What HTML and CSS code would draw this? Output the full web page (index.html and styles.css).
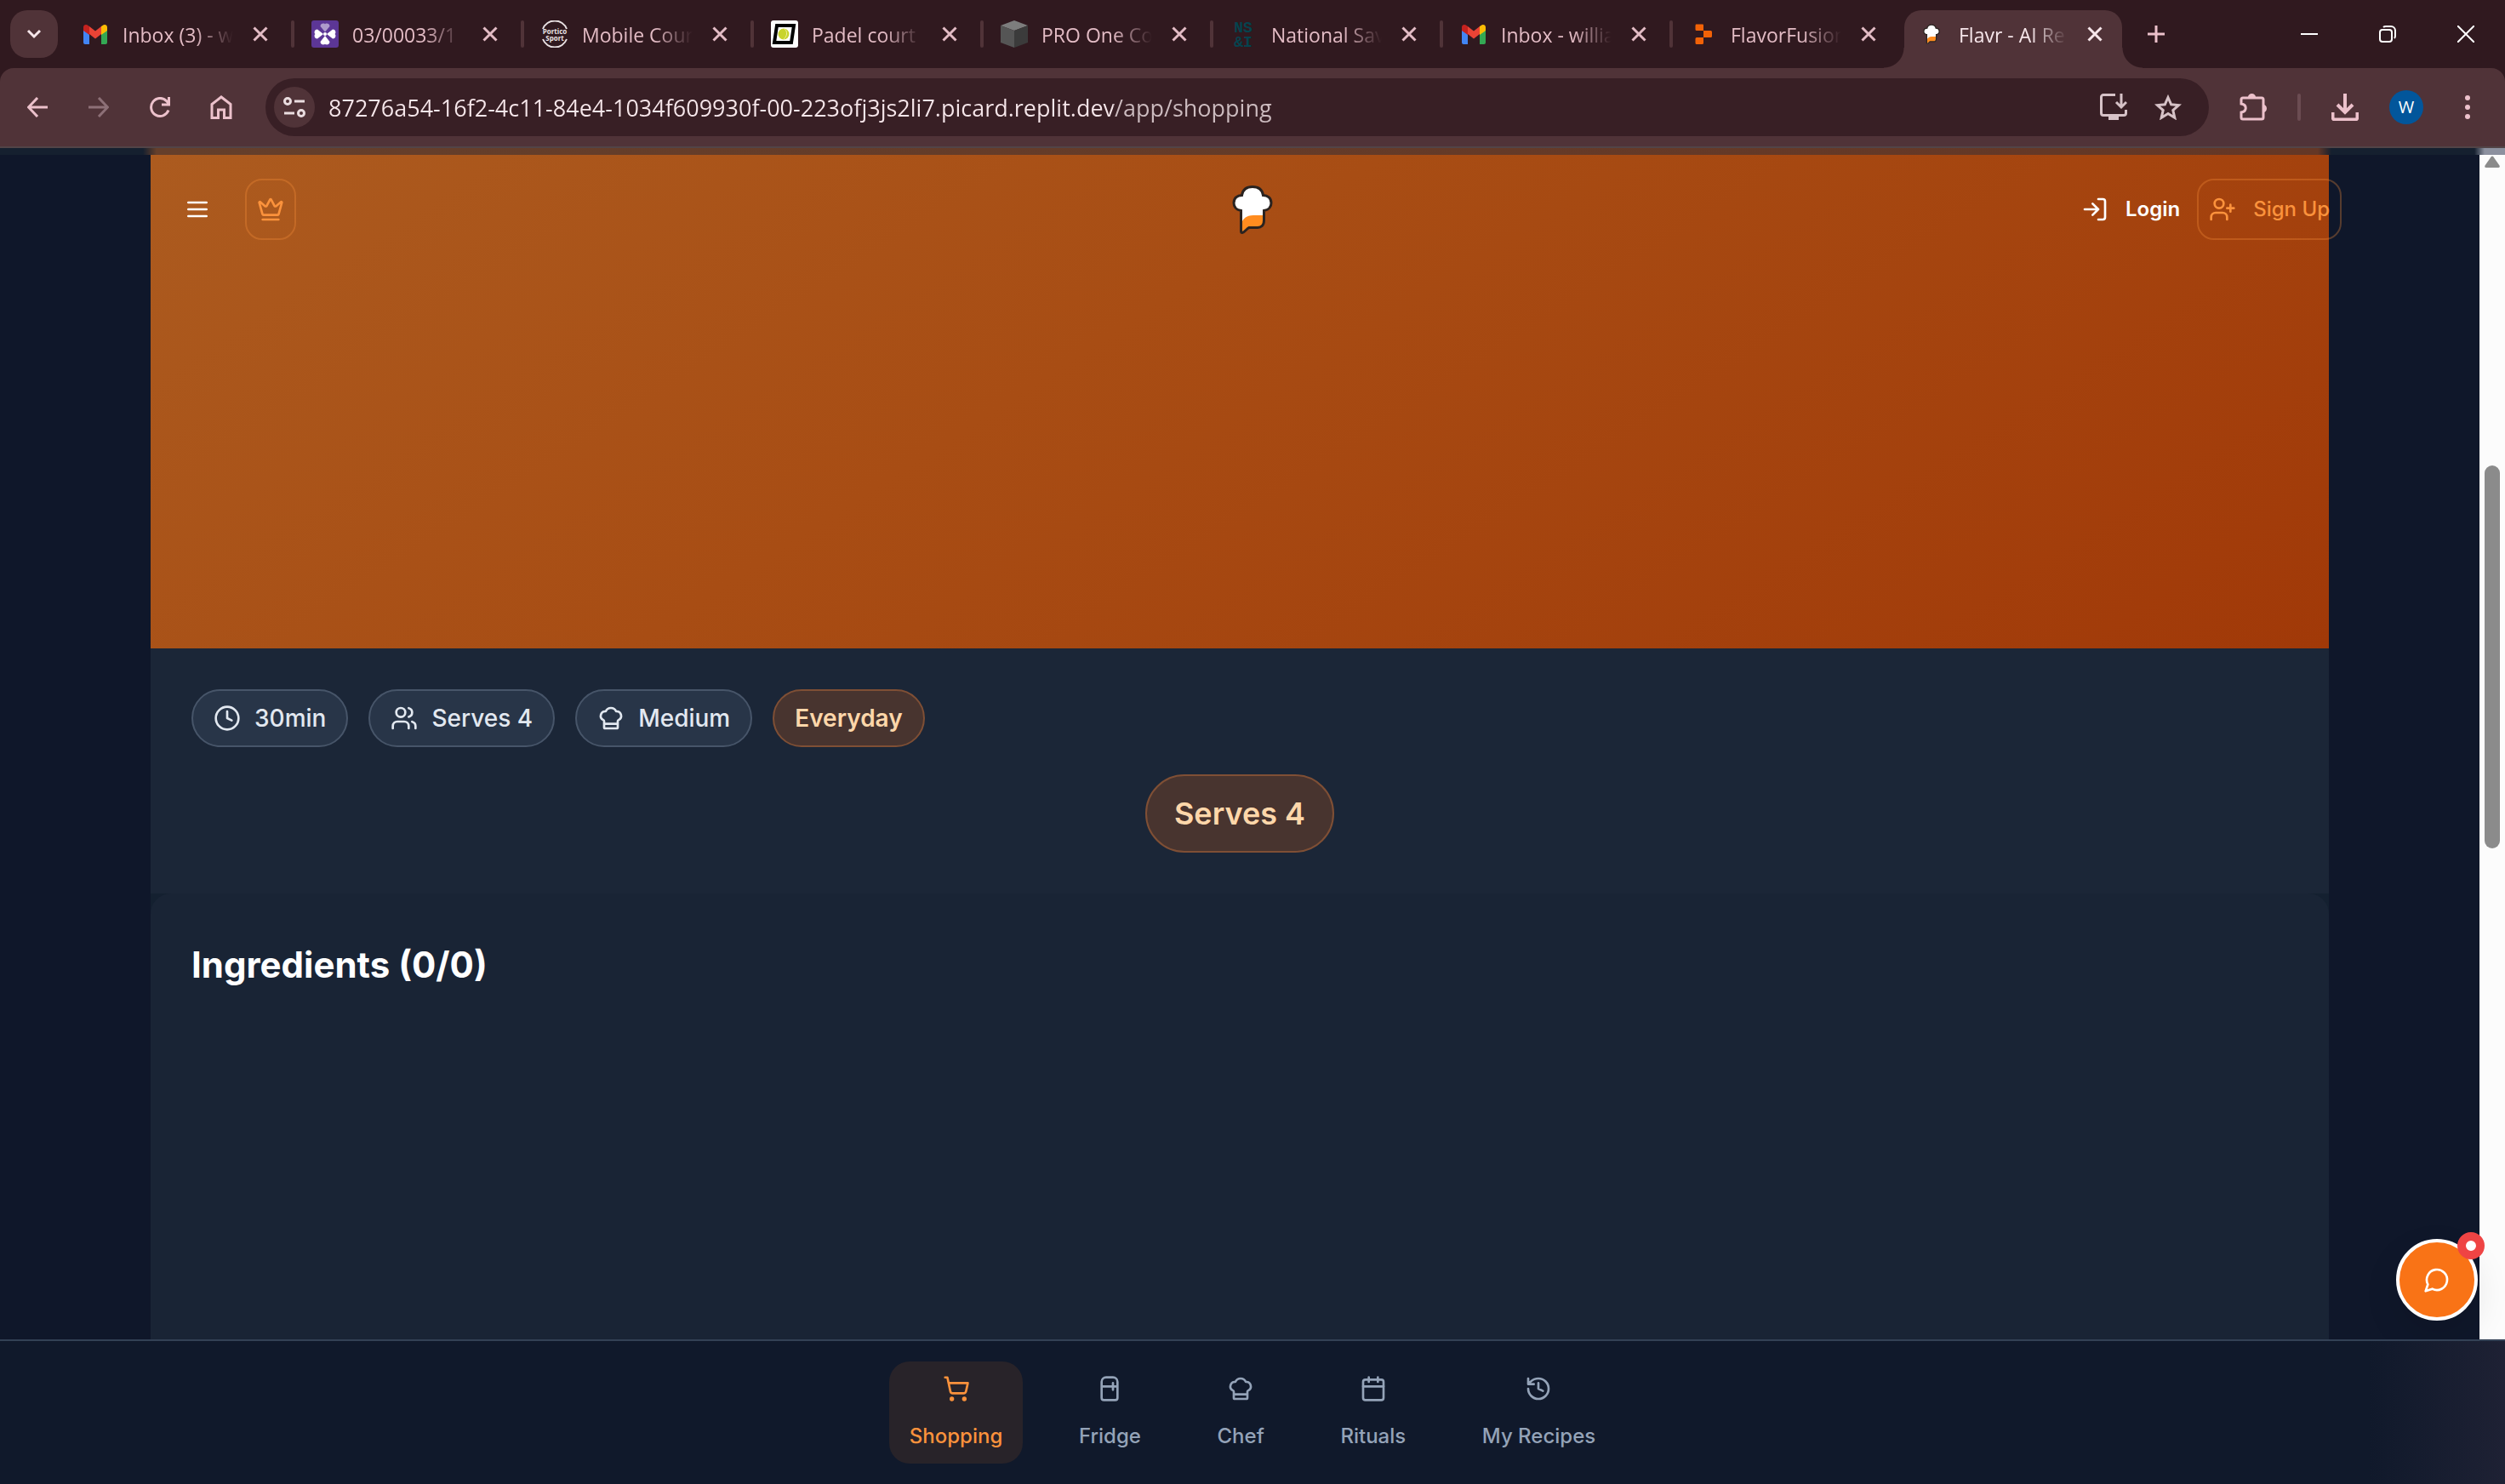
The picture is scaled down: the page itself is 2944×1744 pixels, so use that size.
FILE: index.html
```html
<!DOCTYPE html>
<html lang="en">
<head>
<meta charset="utf-8">
<title>Flavr - AI Recipes</title>
<link rel="stylesheet" href="styles.css">
</head>
<body>
<svg class="defs" aria-hidden="true">
  <symbol id="x" viewBox="0 0 18 18"><path d="M1.500 1.500l15 15M16.500 1.500l-15 15" fill="none" stroke="currentColor" stroke-width="3"/></symbol>
  <symbol id="gmail" viewBox="0 0 32 32"><path d="M2 9v17a2 2 0 0 0 2 2h5V14z" fill="#4285f4"/><path d="M23 14v14h5a2 2 0 0 0 2-2V9z" fill="#34a853"/><path d="M9 7v9l7 5.500 7-5.500V7l-7 5.500z" fill="#ea4335"/><path d="M2 8v4l7 5V7L7.500 6C5 4 2 5.500 2 8z" fill="#c5221f"/><path d="M30 8v4l-7 5V7l1.500-1C27 4 30 5.500 30 8z" fill="#fbbc04"/></symbol>
  <symbol id="flavr" viewBox="0 0 48 58"><path d="M10.500 30.500C4 29.500 2 25 2 21.500c0-5.500 4-9 9.500-9C12.500 6 17 2.500 24 2.500S35.500 6 36.500 12.500c5.500 0 9.500 3.500 9.500 9 0 3.500-2 8-8.500 9V42c0 6-3.500 8.500-7.500 8.500H20c-3 1-5 5.500-8 6-1 0-1.500-.5-1.500-2z" fill="#fff"/><path d="M37.500 36H25C17 36 12 40 10.500 47v9c4-1 5-5.500 9-5.500h11c4 0 7-3 7-8z" fill="#ff8c1f"/><path d="M10.500 30.500C4 29.500 2 25 2 21.500c0-5.500 4-9 9.500-9C12.500 6 17 2.500 24 2.500S35.500 6 36.500 12.500c5.500 0 9.500 3.500 9.500 9 0 3.500-2 8-8.500 9V42c0 6-3.500 8.500-7.500 8.500H20c-3 1-5 5.500-8 6-1 0-1.500-.5-1.500-2z" fill="none" stroke="#2a2320" stroke-width="3"/></symbol>
  <symbol id="chef" viewBox="0 0 24 24"><path d="M17 21a1 1 0 0 0 1-1v-5.350c0-.457.316-.844.727-1.041a4 4 0 0 0-2.134-7.589 5 5 0 0 0-9.186 0 4 4 0 0 0-2.134 7.588c.411.198.727.585.727 1.041V20a1 1 0 0 0 1 1ZM6 17h12"/></symbol>
</svg>

<div class="chrome">
<div class="tabstrip">
  <button class="tab-search" aria-label="Search tabs"><svg width="18" height="12" viewBox="0 0 18 12"><path d="M2 2l7 7 7-7" fill="none" stroke="#f6e6ea" stroke-width="3"/></svg></button>
  <div class="tabs">
    <div class="tab"><svg class="fav"><use href="#gmail"/></svg><span class="tab-title">Inbox (3) - w</span><button class="tab-close" aria-label="Close tab"><svg><use href="#x"/></svg></button></div>
    <div class="tab"><svg class="fav" viewBox="0 0 32 32"><rect width="32" height="32" rx="3" fill="#5c3696"/><g fill="#fff"><circle cx="16" cy="16" r="2"/><path d="M14 16l-7 5.500c-4 0-4-5-2.500-5.500-1.500-.5-1.500-5.500 2.500-5.500zM18 16l7 5.500c4 0 4-5 2.500-5.500 1.500-.5 1.500-5.500-2.500-5.500zM16 18l-5.500 7c0 4 5 4 5.500 2.500.5 1.500 5.500 1.500 5.500-2.500z"/><path d="M16 13.500L10.500 7c0-4 5-4 5.500-2.500.5-1.500 5.500-1.500 5.500 2.500z" opacity=".5"/></g></svg><span class="tab-title">03/00033/1</span><button class="tab-close" aria-label="Close tab"><svg><use href="#x"/></svg></button></div>
    <div class="tab"><svg class="fav" viewBox="0 0 32 32"><path d="M2 10a15 15 0 0 1 28 0M2 22a15 15 0 0 0 28 0" fill="none" stroke="#e8e0e2" stroke-width="2"/><text x="16" y="16" class="fav-text">Portico</text><text x="16" y="24" class="fav-text">Sport</text></svg><span class="tab-title">Mobile Cour</span><button class="tab-close" aria-label="Close tab"><svg><use href="#x"/></svg></button></div>
    <div class="tab"><svg class="fav" viewBox="0 0 32 32"><rect width="32" height="32" rx="3" fill="#fff"/><path d="M7 6h20l-3 20H4z" fill="none" stroke="#000" stroke-width="4"/><circle cx="15" cy="16" r="6.500" fill="#c9d42c"/><path d="M16 10c4 3 3 9-1 12" fill="none" stroke="#eef29a"/></svg><span class="tab-title">Padel court h</span><button class="tab-close" aria-label="Close tab"><svg><use href="#x"/></svg></button></div>
    <div class="tab"><svg class="fav" viewBox="0 0 32 32"><path d="M16 0l16 6-16 6L0 6z" fill="#7d7d7d"/><path d="M0 6l16 6v20L0 26z" fill="#555"/><path d="M32 6l-16 6v20l16-6z" fill="#3b3b3b"/></svg><span class="tab-title">PRO One Co</span><button class="tab-close" aria-label="Close tab"><svg><use href="#x"/></svg></button></div>
    <div class="tab"><svg class="fav" viewBox="0 0 32 32"><text x="15" y="14" class="fav-nsi">NS</text><text x="15" y="31" class="fav-nsi">&amp;I</text></svg><span class="tab-title">National Sav</span><button class="tab-close" aria-label="Close tab"><svg><use href="#x"/></svg></button></div>
    <div class="tab"><svg class="fav"><use href="#gmail"/></svg><span class="tab-title">Inbox - willia</span><button class="tab-close" aria-label="Close tab"><svg><use href="#x"/></svg></button></div>
    <div class="tab"><svg class="fav" viewBox="0 0 32 32"><path d="M7 4.500h8a1 1 0 0 1 1 1V12H8a1.500 1.500 0 0 1-1.500-1.500V6zM16 12h8.500a1.500 1.500 0 0 1 1.500 1.500v5a1.500 1.500 0 0 1-1.500 1.500H16zM8 20h8v6.500a1.500 1.500 0 0 1-1.500 1.500H8a1.500 1.500 0 0 1-1.500-1.500v-5A1.500 1.500 0 0 1 8 20z" fill="#f26207"/></svg><span class="tab-title">FlavorFusion</span><button class="tab-close" aria-label="Close tab"><svg><use href="#x"/></svg></button></div>
    <div class="tab active"><svg class="fav fav-small"><use href="#flavr"/></svg><span class="tab-title">Flavr - AI Re</span><button class="tab-close" aria-label="Close tab"><svg><use href="#x"/></svg></button></div>
  </div>
  <button class="new-tab" aria-label="New tab"><svg width="20" height="20" viewBox="0 0 20 20"><path d="M10 0v20M0 10h20" stroke="#ecc1cb" stroke-width="3"/></svg></button>
  <div class="window-buttons">
    <button aria-label="Minimise"><svg width="20" height="20" viewBox="0 0 20 20"><path d="M0 10h20" stroke="#fff" stroke-width="2"/></svg></button>
    <button aria-label="Restore"><svg width="20" height="20" viewBox="0 0 20 20" fill="none" stroke="#fff" stroke-width="2"><rect x="1" y="5" width="14" height="14" rx="3"/><path d="M5 2c1-1 2-1 3-1h6a5 5 0 0 1 5 5v6c0 1 0 2-1 3"/></svg></button>
    <button aria-label="Close"><svg width="20" height="20" viewBox="0 0 20 20"><path d="M0 0l20 20M20 0L0 20" stroke="#fff" stroke-width="2"/></svg></button>
  </div>
</div>

<div class="toolbar">
  <div class="nav-tools">
    <button class="tool" aria-label="Back"><svg width="24" height="24" viewBox="0 0 24 24"><path d="M24 12H2M12 1L1.500 12 12 23" fill="none" stroke="#ecc1cb" stroke-width="3"/></svg></button>
    <button class="tool" aria-label="Forward"><svg width="24" height="24" viewBox="0 0 24 24"><path d="M0 12h22M12 1l10.500 11L12 23" fill="none" stroke="#8d7077" stroke-width="3"/></svg></button>
    <button class="tool" aria-label="Reload"><svg width="24" height="24" viewBox="0 0 24 24"><path d="M22 15.500A10.500 10.500 0 1 1 20 5l2.500 3M22.500 0v9H14" fill="none" stroke="#ecc1cb" stroke-width="3"/></svg></button>
    <button class="tool" aria-label="Home"><svg width="28" height="28" viewBox="0 0 28 28"><path d="M3 26.500V10.500L14 2l11 8.500v16h-7.500V17h-7v9.500z" fill="none" stroke="#ecc1cb" stroke-width="3"/></svg></button>
  </div>
  <div class="omnibox">
    <button class="site-info" aria-label="Site information"><svg width="26" height="26" viewBox="0 0 26 26" fill="none" stroke="#eadde0" stroke-width="3"><circle cx="5" cy="6" r="3.500"/><path d="M13 6h12M1 20h12"/><circle cx="21" cy="20" r="3.500"/></svg></button>
    <input class="url" aria-label="Address" value="87276a54-16f2-4c11-84e4-1034f609930f-00-223ofj3js2li7.picard.replit.dev/app/shopping">
    <button class="tool" aria-label="Install app"><svg width="32" height="32" viewBox="0 0 32 32"><path d="M18 1.500H4A2.500 2.500 0 0 0 1.500 4v19A2.500 2.500 0 0 0 4 25.500h24a2.500 2.500 0 0 0 2.500-2.500v-4M25 0v15M19 10l6 6 6-6" fill="none" stroke="#d6c2c7" stroke-width="3"/><path d="M10 26h12v5H10z" fill="#d6c2c7"/></svg></button>
    <button class="tool" aria-label="Bookmark"><svg width="32" height="30" viewBox="0 0 32 30"><path d="M16 3.500l3.700 8.300 8.800.8-6.700 6 2 8.700L16 22.500l-7.800 4.800 2-8.700-6.700-6 8.800-.8z" fill="none" stroke="#d6c2c7" stroke-width="3"/></svg></button>
  </div>
  <button class="tool" aria-label="Extensions"><svg width="32" height="32" viewBox="0 0 32 32"><path d="M4 5h22a2 2 0 0 1 2 2v21a2 2 0 0 1-2 2H4a2 2 0 0 1-2-2v-6c7-1 7-9 0-10V7a2 2 0 0 1 2-2z" fill="none" stroke="#ecc1cb" stroke-width="3"/><path d="M10 4a4.500 4 0 0 1 9 0zM28 13a4 4.500 0 0 1 0 9z" fill="#ecc1cb"/></svg></button>
  <span class="divider"></span>
  <button class="tool" aria-label="Downloads"><svg width="32" height="32" viewBox="0 0 32 32"><path d="M16 0v21M7 13l9 9 9-9M1.500 22v6a2.500 2.500 0 0 0 2.500 2.500h24a2.500 2.500 0 0 0 2.500-2.500v-6" fill="none" stroke="#ecc1cb" stroke-width="4"/></svg></button>
  <button class="avatar" aria-label="Profile">W</button>
  <button class="tool" aria-label="Menu"><svg width="6" height="28" viewBox="0 0 6 28" fill="#ecc1cb"><circle cx="3" cy="3" r="3"/><circle cx="3" cy="14" r="3"/><circle cx="3" cy="25" r="3"/></svg></button>
</div>
</div>

<div class="app">
  <div class="top-edge"></div>
  <header class="app-header">
    <button class="menu-btn" aria-label="Open menu"><svg width="32" height="32" viewBox="0 0 24 24" class="line"><path d="M4 12h16M4 6h16M4 18h16"/></svg></button>
    <button class="outline-btn crown" aria-label="Upgrade"><svg width="32" height="32" viewBox="0 0 24 24" class="line"><path d="M11.562 3.266a.5.5 0 0 1 .876 0L15.390 8.870a1 1 0 0 0 1.516.294L21.183 5.500a.5.5 0 0 1 .798.519l-2.834 10.246a1 1 0 0 1-.956.734H5.810a1 1 0 0 1-.957-.734L2.020 6.020a.5.5 0 0 1 .798-.519l4.276 3.664a1 1 0 0 0 1.516-.294zM5 21h14"/></svg></button>
    <svg class="logo" role="img" aria-label="Flavr"><use href="#flavr"/></svg>
    <div class="account">
      <button class="login-btn"><svg width="32" height="32" viewBox="0 0 24 24" class="line"><path d="M15 3h4a2 2 0 0 1 2 2v14a2 2 0 0 1-2 2h-4M10 17l5-5-5-5M15 12H3"/></svg>Login</button>
      <button class="outline-btn signup"><svg width="32" height="32" viewBox="0 0 24 24" class="line"><path d="M16 21v-2a4 4 0 0 0-4-4H6a4 4 0 0 0-4 4v2M19 8v6M22 11h-6"/><circle cx="9" cy="7" r="4"/></svg>Sign Up</button>
    </div>
  </header>

  <div class="scroller">
    <main class="recipe">
      <div class="hero"></div>
      <section class="details">
        <ul class="chips">
          <li class="chip"><svg width="32" height="32" viewBox="0 0 24 24" class="line"><circle cx="12" cy="12" r="10"/><path d="M12 6v6l4 2"/></svg>30min</li>
          <li class="chip"><svg width="32" height="32" viewBox="0 0 24 24" class="line"><path d="M16 21v-2a4 4 0 0 0-4-4H6a4 4 0 0 0-4 4v2"/><circle cx="9" cy="7" r="4"/><path d="M22 21v-2a4 4 0 0 0-3-3.870M16 3.130a4 4 0 0 1 0 7.750"/></svg>Serves 4</li>
          <li class="chip"><svg width="32" height="32" viewBox="0 0 24 24" class="line"><use href="#chef"/></svg>Medium</li>
          <li class="chip warm">Everyday</li>
        </ul>
        <p class="serves">Serves 4</p>
      </section>
      <section class="ingredients"><h2>Ingredients (0/0)</h2></section>
    </main>
    <div class="scrollbar">
      <svg width="18" height="14" viewBox="0 0 18 14"><path d="M7.500 1.500q1.500-2 3 0l7 10q1 2.500-1.500 2.500H2q-2.500 0-1.500-2.500z" fill="#8b8b8b"/></svg>
      <span class="thumb"></span>
    </div>
    <button class="chat" aria-label="Open chat"><svg width="32" height="32" viewBox="0 0 24 24" class="line"><path d="M7.900 20A9 9 0 1 0 4 16.100L2 22Z"/></svg><span class="badge"></span></button>
  </div>

  <nav class="bottom-nav">
    <div class="nav-items">
      <a href="#shopping" class="nav-item current"><svg width="32" height="32" viewBox="0 0 24 24" class="line"><circle cx="8" cy="21" r="1"/><circle cx="19" cy="21" r="1"/><path d="M2.050 2.050h2l2.660 12.420a2 2 0 0 0 2 1.580h9.780a2 2 0 0 0 1.950-1.570l1.650-7.430H5.120"/></svg>Shopping</a>
      <a href="#fridge" class="nav-item"><svg width="32" height="32" viewBox="0 0 24 24" class="line"><path d="M5 6a4 4 0 0 1 4-4h6a4 4 0 0 1 4 4v14a2 2 0 0 1-2 2H7a2 2 0 0 1-2-2ZM5 10h14M15 7v6"/></svg>Fridge</a>
      <a href="#chef-page" class="nav-item"><svg width="32" height="32" viewBox="0 0 24 24" class="line"><use href="#chef"/></svg>Chef</a>
      <a href="#rituals" class="nav-item"><svg width="32" height="32" viewBox="0 0 24 24" class="line"><path d="M8 2v4M16 2v4M3 10h18"/><rect x="3" y="4" width="18" height="18" rx="2"/></svg>Rituals</a>
      <a href="#my-recipes" class="nav-item"><svg width="32" height="32" viewBox="0 0 24 24" class="line"><path d="M3 12a9 9 0 1 0 9-9 9.750 9.750 0 0 0-6.740 2.740L3 8M3 3v5h5M12 7v5l4 2"/></svg>My Recipes</a>
    </div>
  </nav>
</div>
</body>
</html>
```
FILE: styles.css
```css
* { box-sizing: border-box; }
body {
  margin: 0;
  min-height: 100vh;
  display: flex;
  flex-direction: column;
  background: #0f172a;
  font-family: Inter, "Liberation Sans", sans-serif;
}
button { border: 0; padding: 0; margin: 0; background: none; font: inherit; color: inherit; }
.defs { position: absolute; width: 0; height: 0; }
.line { fill: none; stroke: currentColor; stroke-width: 2; stroke-linecap: round; stroke-linejoin: round; flex: none; }

/* Browser tab strip */
.chrome { background: #30191f; }
.tabstrip {
  height: 80px;
  display: flex;
  align-items: center;
  color: #e3bcc5;
  font: 23px/32px "Open Sans", sans-serif;
}
.tab-search {
  width: 56px;
  height: 56px;
  margin: 0 6px 0 12px;
  border-radius: 20px;
  background: #503338;
  display: grid;
  place-items: center;
}
.tabs { display: flex; align-self: stretch; }
.tab {
  width: 270px;
  display: flex;
  align-items: center;
  padding: 0 26px 0 22px;
  position: relative;
}
.tab:not(.active):not(:nth-child(8))::after {
  content: "";
  position: absolute;
  right: -2px;
  width: 4px;
  height: 32px;
  border-radius: 2px;
  background: #503338;
}
.fav { width: 32px; height: 32px; flex: none; }
.fav-small { height: 24px; }
.fav-text { font: 700 8px "Open Sans", sans-serif; fill: #e8e0e2; text-anchor: middle; }
.fav-nsi { font: 700 18px "Liberation Mono", monospace; fill: #05434e; text-anchor: middle; }
.tab-title {
  flex: 1;
  min-width: 0;
  margin-left: 16px;
  margin-right: 20px;
  padding-top: 2px;
  white-space: nowrap;
  mask-image: linear-gradient(to right, #000 65%, transparent);
}
.tab-close { width: 24px; height: 24px; display: grid; place-items: center; }
.tab-close svg { width: 18px; height: 18px; }
.tab.active {
  width: 256px;
  margin: 12px 4px 0;
  padding: 0 20px 12px 16px;
  border-radius: 20px 20px 0 0;
  background: #503338;
  color: #f6e6ea;
}
.tab.active::before, .tab.active::after {
  content: "";
  position: absolute;
  bottom: 0;
  width: 24px;
  height: 24px;
}
.tab.active::before { left: -24px; background: radial-gradient(circle at 0 0, transparent 23px, #503338 24px); }
.tab.active::after { right: -24px; background: radial-gradient(circle at 100% 0, transparent 23px, #503338 24px); }
.new-tab { width: 56px; height: 56px; margin-left: 8px; display: grid; place-items: center; }
.window-buttons { display: flex; margin-left: auto; align-self: stretch; }
.window-buttons button { width: 92px; display: grid; place-items: center; }

/* Browser toolbar */
.toolbar {
  height: 94px;
  display: flex;
  align-items: center;
  padding: 0 20px;
  gap: 28px;
  box-shadow: inset 0 -2px 0 #524447;
  border-radius: 16px 16px 0 0;
  background: #503338;
  padding-bottom: 2px;
}
.nav-tools { display: flex; gap: 24px; }
.tool { width: 48px; height: 48px; flex: none; display: grid; place-items: center; }
.omnibox {
  flex: 1;
  height: 68px;
  padding: 0 24px 0 10px;
  display: flex;
  align-items: center;
  gap: 16px;
  border-radius: 34px;
  background: #381f25;
}
.site-info { width: 48px; height: 48px; border-radius: 50%; background: #503338; display: grid; place-items: center; }
.url {
  flex: 1;
  min-width: 0;
  height: 48px;
  padding: 0;
  border: 0;
  outline: 0;
  background: linear-gradient(to right, #f6e6ea 922px, #cdbcc0 922px);
  background-clip: text;
  color: transparent;
  font: 27px/36px "Open Sans", sans-serif;
}
.divider { width: 4px; height: 32px; border-radius: 2px; background: #6b4c52; }
.avatar {
  width: 40px;
  height: 40px;
  border-radius: 50%;
  background: #02569b;
  color: #fff;
  font: 20px/40px "Open Sans", sans-serif;
}

/* App */
.app { flex: 1; display: flex; flex-direction: column; position: relative; }
.top-edge {
  height: 8px;
  background: linear-gradient(to right, #15202f 168px, #653f2b 184px, #643726 calc(100% - 220px), #15202f calc(100% - 204px), #15202f calc(100% - 36px), #8d919f calc(100% - 24px));
}
.app-header {
  position: absolute;
  inset: 8px 0 auto;
  z-index: 2;
  height: 128px;
  padding: 0 192px 0 208px;
  display: flex;
  align-items: center;
  color: #fff;
}
.menu-btn { width: 48px; height: 72px; display: grid; place-items: center; }
.outline-btn {
  height: 72px;
  padding: 0 12px;
  display: flex;
  align-items: center;
  border: 2px solid rgba(251, 146, 60, .3);
  border-radius: 20px;
  color: #fb923c;
}
.crown { margin-left: 32px; }
.logo { width: 48px; height: 58px; position: absolute; left: calc(50% - 24px); }
.account { margin-left: auto; display: flex; align-items: center; gap: 20px; font-size: 24px; font-weight: 500; line-height: 40px; }
.login-btn { display: flex; align-items: center; gap: 20px; font-weight: 600; }
.signup { gap: 20px; white-space: nowrap; }

.scroller { flex: 1; display: flex; position: relative; }
.recipe { flex: 1; max-width: 2560px; margin: 0 auto; display: flex; flex-direction: column; background: #142030; }
.hero { height: 580px; background: linear-gradient(147deg, #ac5b1f, #a84d14 42%, #a13908); }
.details { padding: 48px; background: #1b2637; }
.chips { margin: 0 0 32px; padding: 0; list-style: none; display: flex; gap: 24px; }
.chip {
  height: 68px;
  padding: 0 24px;
  display: flex;
  align-items: center;
  gap: 16px;
  border: 2px solid #475569;
  border-radius: 34px;
  background: #283548;
  color: #e2e8f0;
  font-size: 28px;
  font-weight: 500;
  line-height: 40px;
}
.chip.warm, .serves { border-color: #7f4f35; background: #48342f; color: #fed7aa; font-weight: 600; }
.serves {
  width: fit-content;
  margin: 0 auto;
  padding: 16px 32px;
  border: 2px solid #7f4f35;
  border-radius: 46px;
  font-size: 36px;
  line-height: 56px;
}
.ingredients { flex: 1; padding: 48px; border-radius: 24px 24px 0 0; background: #192435; }
.ingredients h2 { margin: 0; color: #fff; font-size: 42px; font-weight: 700; line-height: 72px; }

.scrollbar {
  width: 30px;
  padding-top: 1px;
  display: flex;
  flex-direction: column;
  align-items: center;
  background: #fcfcfc;
}
.thumb { width: 18px; height: 450px; margin-top: 350px; border-radius: 9px; background: #8b8b8b; }

.chat {
  position: absolute;
  right: 32px;
  bottom: 22px;
  width: 96px;
  height: 96px;
  border: 4px solid #fff;
  border-radius: 50%;
  background: #f97316;
  color: #fff;
  display: grid;
  place-items: center;
  box-shadow: 0 16px 40px rgba(0, 0, 0, .1);
}
.badge {
  position: absolute;
  top: -12px;
  right: -12px;
  width: 32px;
  height: 32px;
  border: 10px solid #ef4444;
  border-radius: 50%;
  background: #fff;
}

.bottom-nav {
  height: 170px;
  padding: 24px;
  border-top: 2px solid #334155;
  background: linear-gradient(to right, #10192b calc(100% - 160px), #1e2134);
  z-index: 1;
}
.nav-items { max-width: 896px; margin: 0 auto; display: flex; justify-content: space-around; }
.nav-item {
  height: 120px;
  padding: 16px 24px;
  display: flex;
  flex-direction: column;
  align-items: center;
  justify-content: space-between;
  border-radius: 24px;
  color: #94a3b8;
  font-size: 24px;
  font-weight: 500;
  line-height: 32px;
  text-decoration: none;
}
.nav-item.current { background: #282329; color: #fb923c; }
```
